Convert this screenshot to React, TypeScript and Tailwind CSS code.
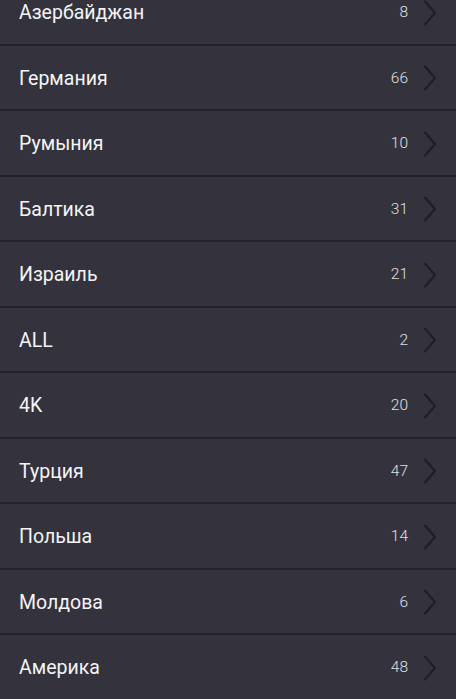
const items: [string, number][] = [
  ["Азербайджан", 8],
  ["Германия", 66],
  ["Румыния", 10],
  ["Балтика", 31],
  ["Израиль", 21],
  ["ALL", 2],
  ["4K", 20],
  ["Турция", 47],
  ["Польша", 14],
  ["Молдова", 6],
  ["Америка", 48],
];

const Chevron = () => (
  <svg width="14" height="26" viewBox="0 0 14 26" fill="none" className="shrink-0">
    <path d="M2 1.5 L12 13 L2 24.5" stroke="#1e1c24" strokeWidth="2" strokeLinecap="round" strokeLinejoin="round" />
  </svg>
);

export default function App() {
  return (
    <div className="h-[699px] w-[456px] overflow-hidden bg-[#34333d] font-['Roboto',sans-serif]">
      <div className="-mt-[20px] flex flex-col">
        {items.map(([name, count]) => (
          <div
            key={name}
            className="flex h-[65.5px] items-center border-b-2 border-[#232129] pl-[19px] pr-[19px] pt-[2px]"
          >
            <span className="flex-1 text-[19.5px] text-[#f4f4f6]">{name}</span>
            <span className="mr-[15px] text-[15.5px] font-light text-[#e0e0e2]">{count}</span>
            <Chevron />
          </div>
        ))}
      </div>
    </div>
  );
}
